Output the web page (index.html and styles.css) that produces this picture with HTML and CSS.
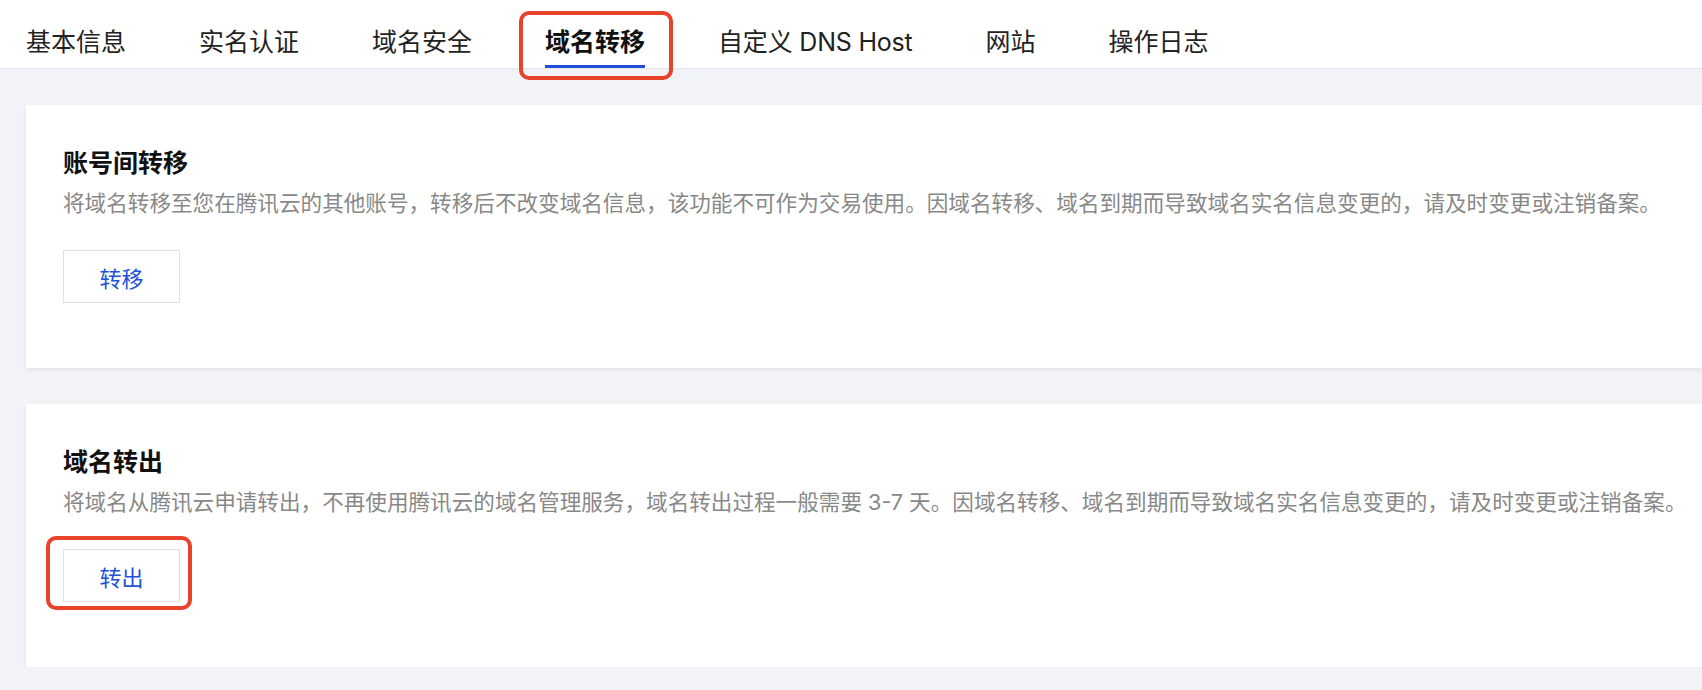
FILE: index.html
```html
<!DOCTYPE html>
<html lang="zh-CN">
<head>
    <meta charset="UTF-8">
    <meta name="viewport" content="width=device-width, initial-scale=1.0">
    <title>域名转移</title>
    <link rel="stylesheet" href="styles.css">
</head>
<body>
    <nav class="tabs">
        <a href="#" class="tab">基本信息</a>
        <a href="#" class="tab">实名认证</a>
        <a href="#" class="tab">域名安全</a>
        <a href="#" class="tab active">域名转移<span class="mark mark-tab"></span></a>
        <a href="#" class="tab tab-latin">自定义 DNS Host</a>
        <a href="#" class="tab">网站</a>
        <a href="#" class="tab">操作日志</a>
    </nav>

    <main class="content">
        <section class="card">
            <h2 class="card-title">账号间转移</h2>
            <p class="card-desc">将域名转移至您在腾讯云的其他账号，转移后不改变域名信息，该功能不可作为交易使用。因域名转移、域名到期而导致域名实名信息变更的，请及时变更或注销备案。</p>
            <div class="actions">
                <button class="btn">转移</button>
            </div>
        </section>

        <section class="card">
            <h2 class="card-title">域名转出</h2>
            <p class="card-desc">将域名从腾讯云申请转出，不再使用腾讯云的域名管理服务，域名转出过程一般需要 3-7 天。因域名转移、域名到期而导致域名实名信息变更的，请及时变更或注销备案。</p>
            <div class="actions">
                <button class="btn">转出<span class="mark mark-btn"></span></button>
            </div>
        </section>
    </main>
</body>
</html>
```

FILE: styles.css
```css
body {
    margin: 0;
    background-color: #f2f3f7;
    font-family: Inter, "Noto Sans CJK SC", sans-serif;
    color: #222;
}

.tabs {
    display: flex;
    gap: 73px;
    height: 68px;
    padding-left: 26px;
    background-color: #fff;
    border-bottom: 1px solid #e4e6eb;
}

.tab {
    position: relative;
    padding-top: 24px;
    padding-bottom: 5px;
    line-height: 36px;
    font-size: 25px;
    color: #222;
    text-decoration: none;
    border-bottom: 3px solid transparent;
}

.tab-latin {
    letter-spacing: -0.2px;
}

.tab.active {
    font-weight: 700;
    color: #111;
    border-bottom-color: #1f4fd6;
}

/* red annotation boxes */
.mark {
    position: absolute;
    border: 4px solid #e8432b;
    border-radius: 10px;
    pointer-events: none;
}

.mark-tab {
    left: -26px;
    right: -28px;
    top: 11px;
    bottom: -15px;
}

.mark-btn {
    left: -18px;
    right: -13px;
    top: -14px;
    bottom: -9px;
}

.content {
    display: flex;
    flex-direction: column;
    gap: 36px;
    padding: 36px 0 0 26px;
}

.card {
    background-color: #fff;
    padding: 40px 0 65px 37px;
    box-shadow: 0 2px 4px rgba(40, 48, 80, 0.07);
}

.card-title {
    margin: 0;
    font-size: 25px;
    line-height: 36px;
    font-weight: 700;
    color: #111;
}

.card-desc {
    margin: 7px 0 0;
    font-size: 21.6px;
    line-height: 30px;
    color: #888;
    white-space: nowrap;
}

.actions {
    margin-top: 32px;
    display: flex;
}

.btn {
    position: relative;
    width: 117px;
    height: 53px;
    padding: 0;
    background-color: #fff;
    border: 1px solid #dfe1e7;
    color: #2152d8;
    font-family: Inter, "Noto Sans CJK SC", sans-serif;
    font-size: 22px;
    cursor: pointer;
}
```
